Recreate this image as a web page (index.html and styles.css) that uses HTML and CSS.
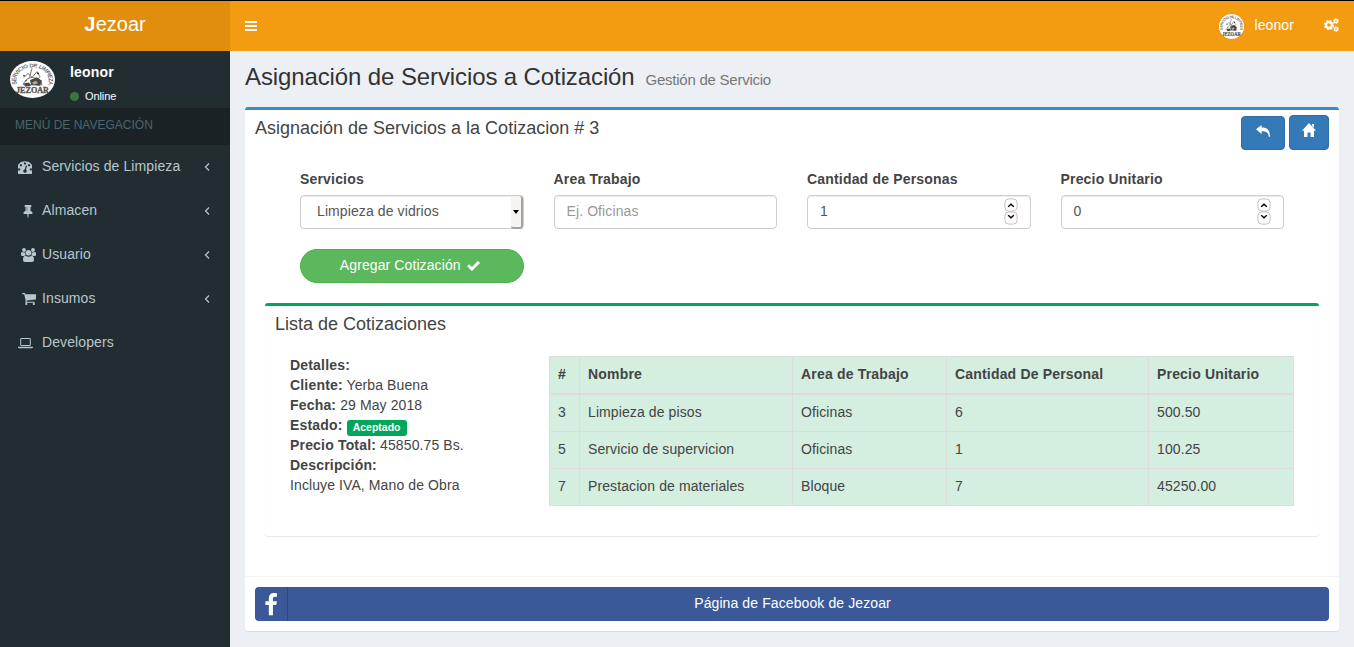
FILE: index.html
```html
<!DOCTYPE html>
<html lang="es">
<head>
<meta charset="utf-8">
<title>Jezoar</title>
<link rel="stylesheet" href="styles.css">
</head>
<body>
<svg class="defs" width="45" height="45">
  <symbol id="brand" viewBox="0 0 45 45" preserveAspectRatio="none">
    <circle cx="22.500" cy="22.500" r="22.500" fill="#fff"/>
    <path id="arc" d="M6.800 28A16.300 16.300 0 1 1 38.200 28" fill="none"/>
    <text font-family="Liberation Sans" font-size="6" fill="#55534c" stroke="#55534c" stroke-width=".15"><textPath href="#arc" textLength="60">SERVICIO DE LIMPIEZA</textPath></text>
    <path d="M22 9L19.500 20M14 20l4-5 4 5 5-7 3 6-3 4M13 28l4-6 4-2 6 1 4 4 1 4H14z" fill="none" stroke="#6a675f" stroke-width="1"/>
    <path d="M20 23l7-3 5 4-2 6-9-1zM14 27l5-1 2 4-6 1z" fill="#4a4842"/>
    <path d="M22 26l4-2 2 3-4 2z" fill="#aaa79f"/>
    <circle cx="14" cy="18" r="1" fill="#333"/><circle cx="28" cy="15" r="1.100" fill="#333"/><circle cx="16" cy="24" r=".8" fill="#333"/>
    <text x="6" y="39" textLength="33" lengthAdjust="spacingAndGlyphs" font-family="Liberation Serif" font-size="10" font-weight="700" fill="#55534c" stroke="#55534c" stroke-width=".4">JEZOAR</text>
  </symbol>
</svg>
<header class="main-header">
  <div class="logo"><span><b>J</b>ezoar</span></div>
  <nav class="navbar">
    <svg class="bars" viewBox="0 0 12 10"><path d="M0 0h12v2H0zM0 4h12v2H0zM0 8h12v2H0z"/></svg>
    <div class="nav-right">
      <svg class="nav-photo"><use href="#brand"/></svg>
      <span class="nav-name">leonor</span>
      <svg class="cogs" viewBox="0 0 15 14">
        <circle cx="5" cy="7" r="3" fill="none" stroke="#fff" stroke-width="2.300"/>
        <circle cx="5" cy="7" r="4.400" fill="none" stroke="#fff" stroke-width="1.400" stroke-dasharray="1.900 1.556"/>
        <circle cx="12" cy="3" r="1.600" fill="none" stroke="#fff" stroke-width="1.500"/>
        <circle cx="12" cy="3" r="2.500" fill="none" stroke="#fff" stroke-width=".8" stroke-dasharray="1.400 1.218"/>
        <circle cx="12" cy="11" r="1.600" fill="none" stroke="#fff" stroke-width="1.500"/>
        <circle cx="12" cy="11" r="2.500" fill="none" stroke="#fff" stroke-width=".8" stroke-dasharray="1.400 1.218"/>
      </svg>
    </div>
  </nav>
</header>
<div class="wrapper">
  <aside class="sidebar">
    <div class="user-panel">
      <svg class="user-photo"><use href="#brand"/></svg>
      <div class="user-info"><b>leonor</b><span class="status"><i></i>Online</span></div>
    </div>
    <div class="menu-header">MENÚ DE NAVEGACIÓN</div>
    <ul class="menu">
      <li><svg class="ico" viewBox="128 128 1536 1536"><path d="M384 1152q0-53-37.500-90.500t-90.500-37.500-90.500 37.500-37.500 90.500 37.500 90.500 90.500 37.500 90.500-37.500 37.500-90.500zm192-448q0-53-37.500-90.500t-90.500-37.500-90.500 37.500-37.500 90.500 37.500 90.500 90.500 37.500 90.500-37.500 37.500-90.500zm428 481l101-382q6-26-7.500-48.500t-38.500-29.500-48 6.500-30 39.500l-101 382q-60 5-107 43.500t-63 98.500q-20 77 20 146t117 89 146-20 89-117q16-60-6-117t-72-91zm660-33q0-53-37.500-90.500t-90.500-37.500-90.500 37.500-37.500 90.500 37.500 90.500 90.500 37.500 90.500-37.500 37.500-90.500zm-640-640q0-53-37.500-90.500t-90.500-37.500-90.500 37.500-37.500 90.500 37.500 90.500 90.500 37.500 90.500-37.500 37.500-90.500zm448 192q0-53-37.500-90.500t-90.500-37.500-90.500 37.500-37.500 90.500 37.500 90.500 90.500 37.500 90.500-37.500 37.500-90.500zm320 448q0 261-141 483-19 29-54 29h-1402q-35 0-54-29-141-221-141-483 0-182 71-348t191-286 286-191 348-71 348 71 286 191 191 286 71 348z"/></svg><span class="t1">Servicios de Limpieza</span><svg class="angle" viewBox="0 0 6 8"><path d="M5 .5L1.500 4 5 7.500"/></svg></li>
      <li><svg class="ico shift" viewBox="0 0 1792 1792"><path d="M800 864v-448q0-14-9-23t-23-9-23 9-9 23v448q0 14 9 23t23 9 23-9 9-23zm672 352q0 26-19 45t-45 19h-429l-51 483q-2 12-10.500 20.500t-20.500 8.500h-1q-27 0-32-27l-76-485h-404q-26 0-45-19t-19-45q0-123 78.500-221.500t177.500-98.500v-512q-52 0-90-38t-38-90 38-90 90-38h640q52 0 90 38t38 90-38 90-90 38v512q99 0 177.500 98.500t78.500 221.500z"/></svg><span>Almacen</span><svg class="angle" viewBox="0 0 6 8"><path d="M5 .5L1.500 4 5 7.500"/></svg></li>
      <li><svg class="ico shift wide" viewBox="0 0 15 14"><circle cx="3" cy="2" r="1.900"/><circle cx="12" cy="2" r="1.900"/><path d="M0 7V5.500Q0 3.700 1.300 4q1.500.8 3 .2-.3 2 .6 3.100-1.200 0-1.900.8H1.500Q0 8.100 0 7zM15 7V5.500Q15 3.700 13.700 4q-1.500.8-3 .2.300 2-.6 3.100 1.200 0 1.900.8h1.500Q15 8.100 15 7z"/><circle cx="7.500" cy="4.800" r="2.800"/><path d="M2 12q0-4.200 2.600-4.200 2.900 1.800 5.800 0Q13 7.800 13 12q0 2-2 2H4q-2 0-2-2z"/></svg><span>Usuario</span><svg class="angle" viewBox="0 0 6 8"><path d="M5 .5L1.500 4 5 7.500"/></svg></li>
      <li><svg class="ico cart" viewBox="64 128 1664 1536"><path d="M704 1536q0 52-38 90t-90 38-90-38-38-90 38-90 90-38 90 38 38 90zm896 0q0 52-38 90t-90 38-90-38-38-90 38-90 90-38 90 38 38 90zm128-1088v512q0 24-16.500 42.500t-40.500 21.500l-1044 122q13 60 13 70 0 16-24 64h920q26 0 45 19t19 45-19 45-45 19h-1024q-26 0-45-19t-19-45q0-11 8-31.500t16-36 21.500-40 15.500-29.500l-177-823h-204q-26 0-45-19t-19-45 19-45 45-19h256q16 0 28.500 6.500t19.500 15.500 13 24.500 8 26 5.500 29.500 4.500 26h1201q26 0 45 19t19 45z"/></svg><span>Insumos</span><svg class="angle" viewBox="0 0 6 8"><path d="M5 .5L1.500 4 5 7.500"/></svg></li>
      <li><svg class="ico laptop" viewBox="0 0 15 14"><path d="M3.500 2h8q1.300 0 1.300 1.300v5.400q0 1.300-1.300 1.300h-8Q2.200 10 2.200 8.700V3.300Q2.200 2 3.500 2zM3.200 3v6h8.600V3zM0 10.700h15v.8q0 .8-1.200.8H1.200q-1.200 0-1.200-.8z" fill-rule="evenodd"/></svg><span>Developers</span></li>
    </ul>
  </aside>
  <main class="content">
    <h1><span class="page-title">Asignación de Servicios a Cotización</span><small>Gestión de Servicio</small></h1>
    <section class="box">
      <div class="box-header">
        <h3 class="box-title">Asignación de Servicios a la Cotizacion # 3</h3>
        <div class="tools">
          <span class="btn back"><svg viewBox="0 0 14 12"><path d="M0 4.200L5.600 0v2.500c5.400 0 8.400 2.300 8.400 9.300h-1.200C12.300 7.400 10 6.300 5.600 6.300v2.600z"/></svg></span>
          <span class="btn home"><svg viewBox="0 0 14 14"><path d="M7 0l7 7.800h-2V14H8.500V9.500h-3V14H2V7.800H0zM10 1h2v3.800l-2-2z"/></svg></span>
        </div>
      </div>
      <form class="form">
        <div class="field"><label>Servicios</label><div class="control select"><span>Limpieza de vidrios</span><i></i></div></div>
        <div class="field"><label>Area Trabajo</label><div class="control placeholder"><span>Ej. Oficinas</span></div></div>
        <div class="field"><label>Cantidad de Personas</label><div class="control"><span>1</span><svg class="spin" viewBox="0 0 14 27"><rect x=".9" y=".9" width="12.200" height="12.200" rx="4"/><rect x=".9" y="13.900" width="12.200" height="12.200" rx="4"/><path d="M4.200 8.800L7 6.200l2.800 2.600M4.200 17.200L7 19.800l2.800-2.600"/></svg></div></div>
        <div class="field"><label>Precio Unitario</label><div class="control"><span>0</span><svg class="spin" viewBox="0 0 14 27"><rect x=".9" y=".9" width="12.200" height="12.200" rx="4"/><rect x=".9" y="13.900" width="12.200" height="12.200" rx="4"/><path d="M4.200 8.800L7 6.200l2.800 2.600M4.200 17.200L7 19.800l2.800-2.600"/></svg></div></div>
        <div class="field add"><span>Agregar Cotización</span><svg viewBox="0 0 13 10"><path d="M0 5.300L2.100 3.200 5 6 10.900 0 13 2.100 5 10z"/></svg></div>
      </form>
      <section class="list-box">
        <h3 class="box-title">Lista de Cotizaciones</h3>
        <div class="list-body">
          <div class="details">
            <div><b>Detalles:</b></div>
            <div><b>Cliente:</b> Yerba Buena</div>
            <div><b>Fecha:</b> 29 May 2018</div>
            <div><b>Estado:</b> <span class="label">Aceptado</span></div>
            <div><b>Precio Total:</b> 45850.75 Bs.</div>
            <div><b>Descripción:</b></div>
            <div>Incluye IVA, Mano de Obra</div>
          </div>
          <table>
            <colgroup><col class="c1"><col class="c2"><col class="c3"><col class="c4"><col class="c5"></colgroup>
            <thead><tr><th>#</th><th>Nombre</th><th>Area de Trabajo</th><th>Cantidad De Personal</th><th>Precio Unitario</th></tr></thead>
            <tbody>
              <tr><td>3</td><td>Limpieza de pisos</td><td>Oficinas</td><td>6</td><td>500.50</td></tr>
              <tr><td>5</td><td>Servicio de supervicion</td><td>Oficinas</td><td>1</td><td>100.25</td></tr>
              <tr><td>7</td><td>Prestacion de materiales</td><td>Bloque</td><td>7</td><td>45250.00</td></tr>
            </tbody>
          </table>
        </div>
      </section>
      <footer class="box-footer">
        <div class="facebook"><span class="fb-icon"><svg viewBox="0 0 1792 1792"><path d="M1343 12v264h-157q-86 0-116 36t-30 108v189h293l-39 296h-254v759h-306v-759h-255v-296h255v-218q0-186 104-288.500t277-102.500q147 0 228 12z"/></svg></span><span class="fb-text">Página de Facebook de Jezoar</span></div>
      </footer>
    </section>
  </main>
</div>
</body>
</html>
```
FILE: styles.css
```css
* { box-sizing: border-box; }
body {
  margin: 0;
  height: 647px;
  overflow: hidden;
  border-top: 1px solid #000;
  display: flex;
  flex-direction: column;
  font: 14px/20px "Liberation Sans", Arial, sans-serif;
  letter-spacing: .1px;
  color: #444;
  background: #ecf0f5;
}
.defs { position: absolute; }
h1, h3, ul { margin: 0; padding: 0; font-weight: 400; }
svg { display: block; flex: none; letter-spacing: 0; }
b, th, label { letter-spacing: .18px; }

.main-header { display: flex; height: 50px; flex: none; color: #fff; }
.logo { width: 230px; background: #e08e0b; text-align: center; font-size: 20px; line-height: 47px; letter-spacing: 0; }
.navbar { flex: 1; display: flex; align-items: center; justify-content: space-between; background: #f39c12; padding: 0 15px; }
.bars { width: 12px; height: 10px; fill: #fff; }
.nav-right { display: flex; align-items: center; }
.nav-photo { width: 25px; height: 25px; margin-right: 10px; }
.nav-name { margin: -3px 30px 0 0; }
.cogs { width: 15px; height: 14px; margin-top: -2px; }

.wrapper { display: flex; flex: 1; }
.sidebar { width: 230px; background: #222d32; color: #b8c7ce; }
.user-panel { display: flex; height: 57px; padding: 10px; color: #fff; }
.user-photo { width: 45px; height: 37px; }
.user-info { padding: 1px 0 0 15px; }
.user-info b { display: block; }
.status { display: flex; align-items: center; font-size: 11px; line-height: 12px; margin-top: 8px; letter-spacing: -.1px; }
.status i { width: 9px; height: 9px; border-radius: 50%; background: #3c763d; margin: 0 6px 0 0; }
.menu-header { height: 37px; padding: 0 15px; line-height: 34px; font-size: 12px; letter-spacing: 0; color: #4b646f; background: #1a2226; }
.menu { list-style: none; }
.menu li { display: flex; align-items: center; height: 44px; padding: 0 20px 1px 18px; }
.menu span { flex: 1; margin-top: -1px; }
.ico { width: 14px; height: 14px; margin-right: 10px; fill: #b8c7ce; }
.ico.shift { margin: 0 7px 0 3px; }
.ico.wide { width: 15px; margin-right: 6px; }
.ico.cart { margin: 0 6px 0 4px; height: 13px; }
.ico.laptop { width: 15px; margin-right: 9px; }
.angle { width: 6px; height: 8px; fill: none; stroke: #b8c7ce; stroke-width: 1.200; margin-top: 1px; }

.content { flex: 1; padding: 0 15px 15px; }
h1 { display: flex; align-items: baseline; height: 56px; padding-top: 12px; font-size: 24px; line-height: 28px; letter-spacing: -.11px; color: #333; }
h1 small { font-size: 15px; letter-spacing: -.25px; color: #777; margin-left: 11px; }
.box { height: 524px; background: #fff; border-top: 3px solid #3c8dbc; border-radius: 3px; box-shadow: 0 1px 1px rgba(0,0,0,.1); display: flex; flex-direction: column; }
.box-header { display: flex; justify-content: space-between; height: 59px; padding: 5px 10px; }
.box-title { font-size: 18px; line-height: 20px; letter-spacing: 0; }
.box-header .box-title { margin-top: 3px; }
.tools { display: flex; gap: 4px; align-items: flex-end; height: 35px; }
.btn { display: flex; justify-content: center; background: #337ab7; border: 1px solid #2e6da4; border-radius: 4px; }
.btn svg { fill: #fff; width: 14px; }
.back { width: 44px; height: 34px; padding-top: 8px; }
.back svg { height: 12px; }
.home { width: 40px; height: 35px; padding-top: 7px; }
.home svg { height: 14px; }

.form { display: grid; grid-template-columns: repeat(4, 1fr); column-gap: 30px; row-gap: 20px; padding: 0 55px; height: 134px; align-content: start; }
label { display: block; font-weight: 700; line-height: 20px; margin-bottom: 6px; }
.control { display: flex; justify-content: space-between; height: 34px; border: 1px solid #ccc; border-radius: 4px; padding: 0 12px; line-height: 31px; color: #555; box-shadow: inset 0 1px 1px rgba(0,0,0,.075); }
.placeholder { color: #999; }
.select { padding: 0 0 0 16px; }
.select i { width: 12px; height: 33px; background: #f5f4f2; border: solid #a6a3a0; border-width: 0 2px 2px 0; border-radius: 0 3px 3px 3px; display: flex; align-items: center; justify-content: center; }
.select i::after { content: ""; border: 3px solid transparent; border-top: 4px solid #000; border-bottom: 0; }
.spin { width: 14px; height: 27px; margin-top: 2px; fill: #fff; stroke: #c9c0bb; stroke-width: 1; }
.spin path { fill: none; stroke: #000; stroke-width: 1.400; }
.add { height: 34px; border: 1px solid #4cae4c; border-radius: 17px; background: #5cb85c; color: #fff; display: flex; justify-content: center; align-items: center; gap: 6px; padding-right: 4px; }
.add span { margin-top: -2px; }
.add svg { width: 13px; height: 10px; fill: #fff; }

.list-box { height: 233px; margin: 0 20px; padding: 8px 10px; border-top: 3px solid #00a65a; border-radius: 3px; box-shadow: 0 1px 1px rgba(0,0,0,.1); }
.list-body { display: flex; justify-content: space-between; padding: 21px 15px 0; }
.details { white-space: nowrap; }
.label { display: inline-block; vertical-align: -1px; height: 16px; width: 60px; text-align: center; background: #00a65a; color: #fff; border-radius: 3px; font: 700 10.500px/14px "Liberation Sans", Arial, sans-serif; letter-spacing: 0; }
.details div { height: 20px; }
table { width: 745px; margin-top: 1px; table-layout: fixed; border-collapse: separate; border-spacing: 0; background: #d4eee0; border: solid #ddd; border-width: 1px 0 0 1px; }
th, td { height: 37px; padding: 0 8px 2px; text-align: left; border: solid #ddd; border-width: 0 1px 1px 0; }
th { height: 38px; border-bottom-width: 2px; }
.c1 { width: 30px; } .c2 { width: 213px; } .c3 { width: 154px; } .c4 { width: 202px; } .c5 { width: 145px; }

.box-footer { margin-top: auto; padding: 10px; border-top: 1px solid #f4f4f4; }
.facebook { display: flex; height: 34px; border-radius: 4px; background: #3b5998; color: #fff; line-height: 32px; }
.fb-icon { width: 33px; border-right: 1px solid #2f477a; display: flex; align-items: center; justify-content: center; }
.fb-icon svg { width: 24px; height: 24px; margin-top: 2px; fill: #fff; }
.fb-text { flex: 1; text-align: center; padding-right: 32px; }
```
